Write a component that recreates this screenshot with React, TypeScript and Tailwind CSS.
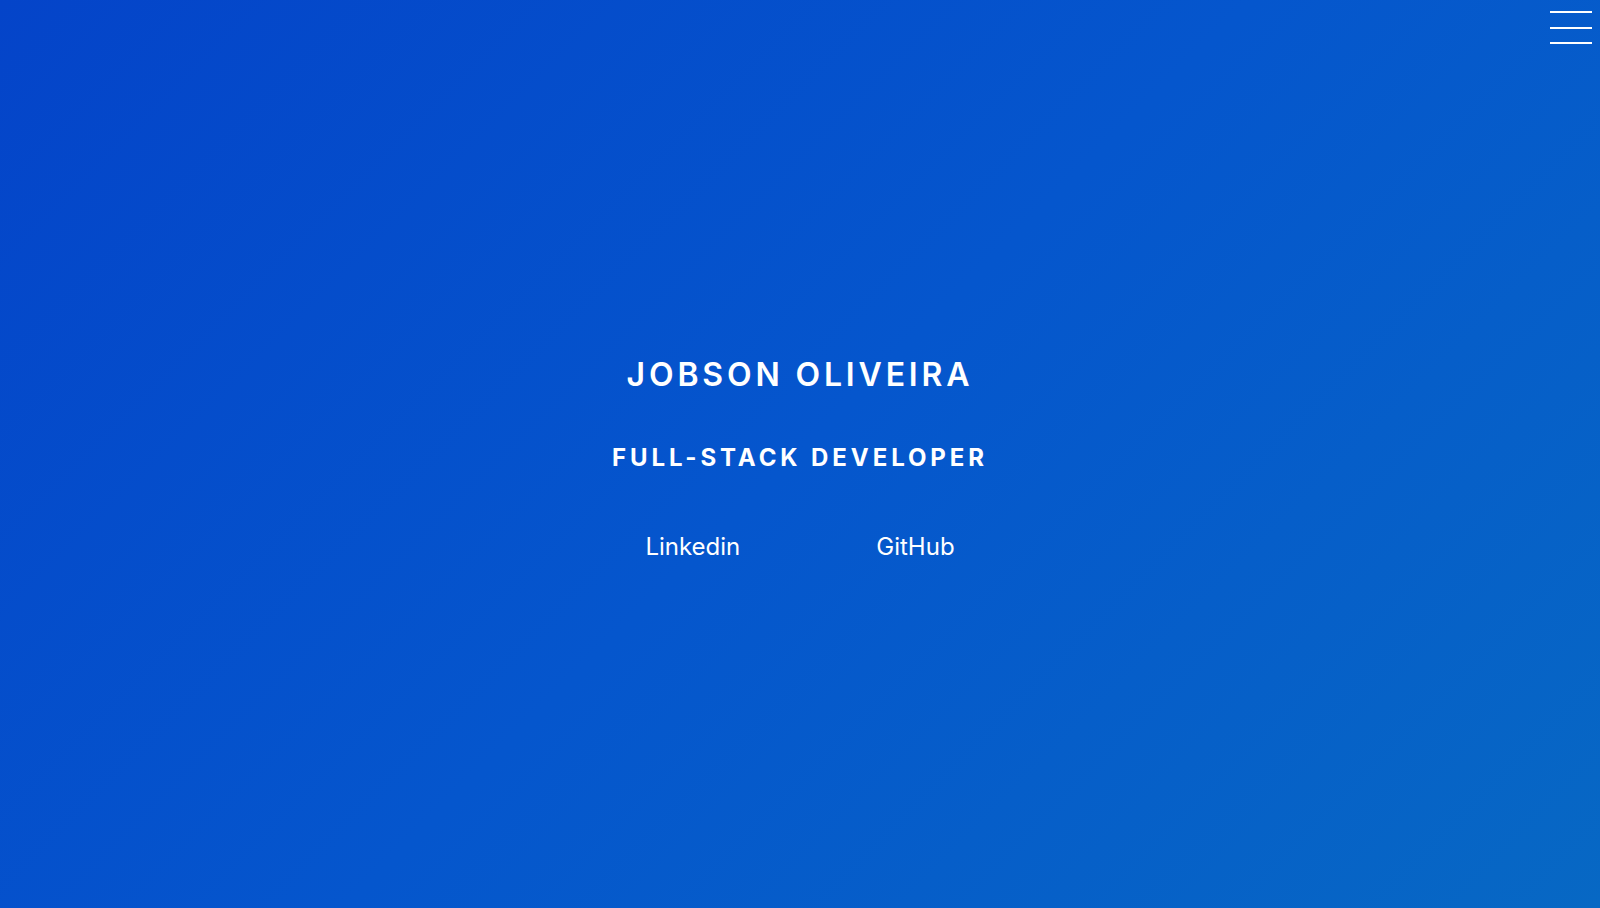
export default function App() {
  return (
    <div
      className="relative flex h-[908px] w-[1600px] flex-col items-center overflow-hidden bg-[linear-gradient(135deg,#0444c9_0%,#0556cd_50%,#0768c4_100%)] text-white"
      style={{ fontFamily: "Inter, 'Noto Sans', sans-serif" }}
    >
      <button className="absolute right-[8px] top-[11px] flex w-[42px] flex-col gap-[13.5px]" aria-label="menu">
        <span className="block h-[2px] w-full bg-white" />
        <span className="block h-[2px] w-full bg-white" />
        <span className="block h-[2px] w-full bg-white" />
      </button>
      <div className="mt-[355px] flex flex-col items-center">
        <h1 className="text-[32px] font-semibold leading-[40px] tracking-[0.12em]">JOBSON OLIVEIRA</h1>
        <h2 className="mt-[48px] text-[24px] font-bold leading-[30px] tracking-[0.163em]">FULL-STACK DEVELOPER</h2>
        <div className="mt-[59px] flex gap-[136px] text-[24px] leading-[30px]">
          <a>Linkedin</a>
          <a>GitHub</a>
        </div>
      </div>
    </div>
  );
}
